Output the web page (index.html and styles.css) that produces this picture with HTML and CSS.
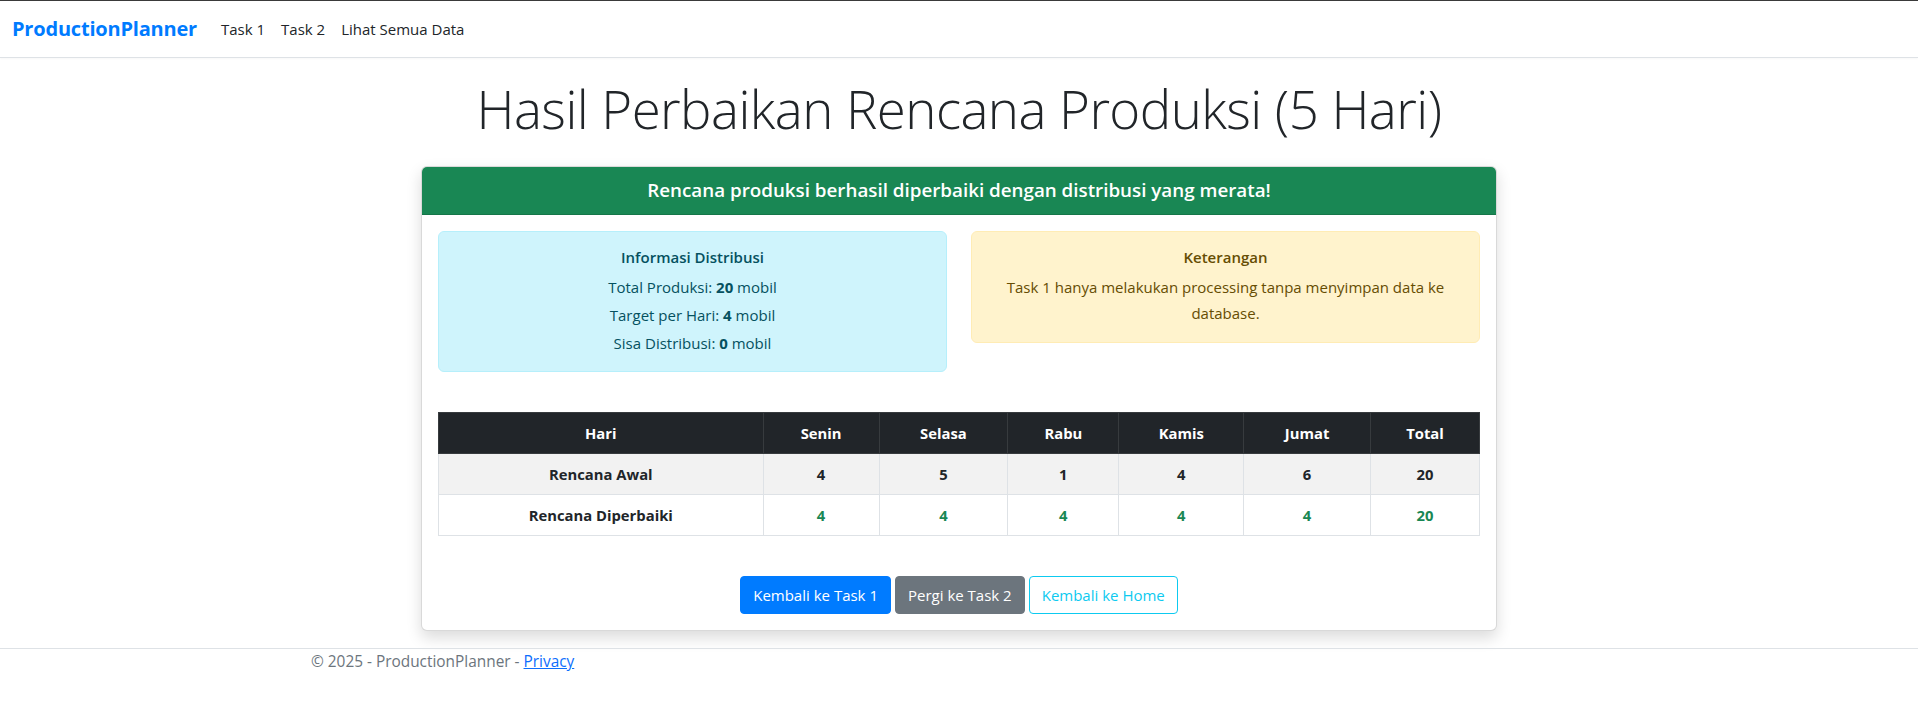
FILE: index.html
```html
<!DOCTYPE html>
<html lang="id">
<head>
<meta charset="utf-8">
<title>Hasil Perbaikan Rencana Produksi - ProductionPlanner</title>
<link rel="stylesheet" href="styles.css">
</head>
<body>
<header class="navbar">
  <a class="brand" href="#">ProductionPlanner</a>
  <nav class="nav">
    <a class="nav-link" href="#">Task 1</a>
    <a class="nav-link" href="#">Task 2</a>
    <a class="nav-link" href="#">Lihat Semua Data</a>
  </nav>
</header>

<main class="container">
  <h1 class="title">Hasil Perbaikan Rencana Produksi (5 Hari)</h1>

  <div class="card">
    <div class="card-header">Rencana produksi berhasil diperbaiki dengan distribusi yang merata!</div>
    <div class="card-body">
      <div class="alerts">
        <div class="alert alert-info">
          <h5 class="alert-heading">Informasi Distribusi</h5>
          <p>Total Produksi: <strong>20</strong> mobil</p>
          <p>Target per Hari: <strong>4</strong> mobil</p>
          <p class="last">Sisa Distribusi: <strong>0</strong> mobil</p>
        </div>
        <div class="alert alert-warning">
          <h5 class="alert-heading">Keterangan</h5>
          <p class="last">Task 1 hanya melakukan processing tanpa menyimpan data ke database.</p>
        </div>
      </div>

      <table class="plan">
        <thead>
          <tr>
            <th class="c-hari">Hari</th>
            <th class="c-senin">Senin</th>
            <th class="c-selasa">Selasa</th>
            <th class="c-rabu">Rabu</th>
            <th class="c-kamis">Kamis</th>
            <th class="c-jumat">Jumat</th>
            <th class="c-total">Total</th>
          </tr>
        </thead>
        <tbody>
          <tr class="striped">
            <td>Rencana Awal</td>
            <td>4</td><td>5</td><td>1</td><td>4</td><td>6</td><td>20</td>
          </tr>
          <tr class="fixed">
            <td>Rencana Diperbaiki</td>
            <td class="ok">4</td><td class="ok">4</td><td class="ok">4</td><td class="ok">4</td><td class="ok">4</td><td class="ok">20</td>
          </tr>
        </tbody>
      </table>

      <div class="actions">
        <a class="btn btn-primary" href="#">Kembali ke Task 1</a>
        <a class="btn btn-secondary" href="#">Pergi ke Task 2</a>
        <a class="btn btn-outline-info" href="#">Kembali ke Home</a>
      </div>
    </div>
  </div>
</main>

<footer class="footer">
  <div class="footer-inner">© 2025 - ProductionPlanner - <a href="#">Privacy</a></div>
</footer>
</body>
</html>
```

FILE: styles.css
```css
* { box-sizing: border-box; }

html, body {
  margin: 0;
  padding: 0;
}

body {
  font-family: "Open Sans", "Noto Sans", sans-serif;
  font-size: 15px;
  line-height: 24px;
  color: #212529;
  background: #fff;
  border-top: 1px solid #3a3a3a;
}

a { text-decoration: none; }

.navbar {
  display: flex;
  align-items: center;
  height: 57px;
  padding: 0 12px;
  border-bottom: 1px solid #dee2e6;
  box-shadow: 0 1px 2px rgba(0,0,0,.03);
}

.brand {
  color: #007bff;
  font-weight: 700;
  font-size: 20px;
  line-height: 30px;
  letter-spacing: -0.2px;
  margin-right: 16px;
}

.nav { display: flex; }

.nav-link {
  color: #212529;
  padding: 8px;
  font-size: 15px;
  font-weight: 500;
}

.container {
  width: 1320px;
  margin: 0 auto;
  padding: 0 12px;
}

.title {
  font-weight: 300;
  font-size: 52.8px;
  line-height: 67px;
  text-align: center;
  margin: 17px 0 24px;
  color: #212529;
  letter-spacing: -0.55px;
}

.card {
  width: 1076px;
  margin: 0 auto;
  border: 1px solid rgba(0,0,0,.15);
  border-radius: 6px;
  box-shadow: 0 .4rem .9rem rgba(0,0,0,.14);
  overflow: hidden;
  background: #fff;
}

.card-header {
  background: #198754;
  color: #fff;
  text-align: center;
  font-size: 18.8px;
  font-weight: 600;
  line-height: 24px;
  padding: 11px 16px 12px;
  border-bottom: 1px solid rgba(0,0,0,.12);
}

.card-body {
  padding: 16px;
}

.alerts {
  display: grid;
  grid-template-columns: 1fr 1fr;
  column-gap: 24px;
  align-items: start;
  margin-bottom: 24px;
}

.alert {
  text-align: center;
  padding: 16px;
  border: 1px solid transparent;
  border-radius: 6px;
  margin-bottom: 16px;
}

.alert-info {
  background: #cff4fc;
  border-color: #b6effb;
  color: #055160;
}

.alert-warning {
  background: #fff3cd;
  border-color: #ffecb5;
  color: #664d03;
}

.alert-heading {
  font-size: 15px;
  font-weight: 600;
  line-height: 19px;
  margin: 0 0 8px;
}

.alert p {
  margin: 0 0 4px;
}

.alert-warning p { line-height: 26px; margin-top: -1px; }

.alert p.last { margin-bottom: 0; }

.alert strong { font-weight: 700; }

.plan {
  width: 100%;
  border-collapse: collapse;
  margin-bottom: 40px;
  text-align: center;
  font-weight: 700;
  font-size: 14.8px;
}

.plan th,
.plan td {
  padding: 8px;
  line-height: 24px;
  border: 1px solid #dee2e6;
}

.plan thead th {
  background: #212529;
  color: #fff;
  border-color: #373b3e;
}

.plan tr.striped td { background: #f2f2f2; }

.plan td.ok { color: #198754; }

.c-hari { width: 325px; }
.c-senin { width: 116px; }
.c-selasa { width: 129px; }
.c-rabu { width: 111px; }
.c-kamis { width: 125px; }
.c-jumat { width: 127px; }
.c-total { width: 109px; }

.actions {
  display: flex;
  justify-content: center;
  gap: 4px;
}

.btn {
  display: inline-block;
  padding: 6px 12px;
  font-size: 15px;
  line-height: 24px;
  border: 1px solid transparent;
  border-radius: 4px;
}

.btn-primary { background: #007bff; border-color: #007bff; color: #fff; }
.btn-secondary { background: #6c757d; border-color: #6c757d; color: #fff; }
.btn-outline-info { background: #fff; border-color: #0dcaf0; color: #0dcaf0; }

.footer {
  margin-top: 17px;
  border-top: 1px solid #dee2e6;
  color: #6c757d;
}

.footer-inner {
  width: 1320px;
  margin: 0 auto;
  padding: 1px 12px 0;
  line-height: 24px;
  font-size: 15.4px;
}

.footer a {
  color: #0d6efd;
  text-decoration: underline;
}
```
